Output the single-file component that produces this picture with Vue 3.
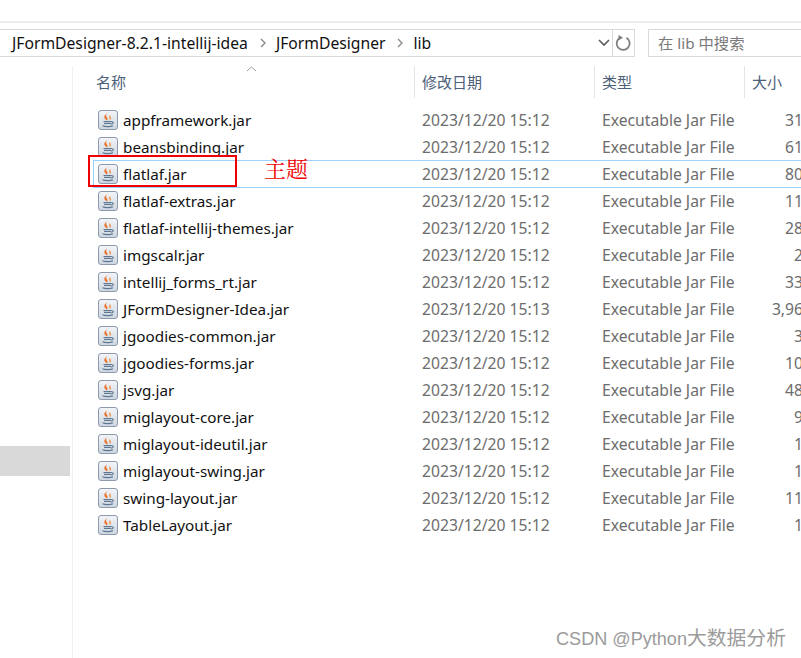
<script setup>
const rows = [
  ['appframework.jar', '2023/12/20 15:12', '31'],
  ['beansbinding.jar', '2023/12/20 15:12', '61'],
  ['flatlaf.jar', '2023/12/20 15:12', '80'],
  ['flatlaf-extras.jar', '2023/12/20 15:12', '11'],
  ['flatlaf-intellij-themes.jar', '2023/12/20 15:12', '28'],
  ['imgscalr.jar', '2023/12/20 15:12', '2'],
  ['intellij_forms_rt.jar', '2023/12/20 15:12', '33'],
  ['JFormDesigner-Idea.jar', '2023/12/20 15:13', '3,96'],
  ['jgoodies-common.jar', '2023/12/20 15:12', '3'],
  ['jgoodies-forms.jar', '2023/12/20 15:12', '10'],
  ['jsvg.jar', '2023/12/20 15:12', '48'],
  ['miglayout-core.jar', '2023/12/20 15:12', '9'],
  ['miglayout-ideutil.jar', '2023/12/20 15:12', '1'],
  ['miglayout-swing.jar', '2023/12/20 15:12', '1'],
  ['swing-layout.jar', '2023/12/20 15:12', '11'],
  ['TableLayout.jar', '2023/12/20 15:12', '1'],
]
</script>

<template>
  <div class="window">
    <div class="topbar">
      <div class="address">
        <span class="crumb">JFormDesigner-8.2.1-intellij-idea</span>
        <svg class="chev" width="8" height="12" viewBox="0 0 8 12"><path d="M2 2l4 4-4 4" fill="none" stroke="#8a8a8a" stroke-width="1.4"/></svg>
        <span class="crumb">JFormDesigner</span>
        <svg class="chev" width="8" height="12" viewBox="0 0 8 12"><path d="M2 2l4 4-4 4" fill="none" stroke="#8a8a8a" stroke-width="1.4"/></svg>
        <span class="crumb">lib</span>
        <svg class="drop" width="14" height="10" viewBox="0 0 14 10"><path d="M2 2l5 5 5-5" fill="none" stroke="#5c5c5c" stroke-width="1.6"/></svg>
        <div class="refresh">
          <svg width="17" height="18" viewBox="0 0 17 18"><path d="M11.500 3.800A6.500 6.500 0 1 1 5 3.700" fill="none" stroke="#7d7d7d" stroke-width="1.800"/><path d="M3.500 1v5.500l4.500-2.700z" fill="#7d7d7d"/></svg>
        </div>
      </div>
      <div class="search">在 lib 中搜索</div>
    </div>
    <div class="main">
      <aside class="side"><div class="side-sel"></div></aside>
      <div class="list">
        <div class="head">
          <svg class="sort" width="11" height="6" viewBox="0 0 11 6"><path d="M1 5l4.500-4 4.500 4" fill="none" stroke="#9a9a9a"/></svg>
          <div class="hcol c-name">名称</div>
          <div class="hcol c-date">修改日期</div>
          <div class="hcol c-type">类型</div>
          <div class="hcol c-size">大小</div>
        </div>
        <div class="rows">
          <div v-for="r in rows" :key="r[0]" class="row" :class="{ hot: r[0] === 'flatlaf.jar' }">
            <div class="c-name cell">
              <svg class="jar" width="20" height="20" viewBox="0 0 20 20">
                <defs>
                  <linearGradient id="jarbg" x1="0" y1="0" x2="0" y2="1">
                    <stop offset="0" stop-color="#f3f5f8"/>
                    <stop offset="1" stop-color="#cdd6e1"/>
                  </linearGradient>
                </defs>
                <rect x="0.500" y="0.500" width="19" height="19" rx="2.500" fill="url(#jarbg)" stroke="#8c9aab"/>
                <path d="M10.800 2c-3 2.300-3.300 3.800-1.700 5.700.8 1 .6 1.900-.1 2.700-2.300-1.400-3.500-3-2.200-4.900.8-1.100 2.500-2.300 4-3.500z" fill="#e8742a"/>
                <path d="M12.500 5c-1.800 1.100-1.900 2.200-1 3.300.5.700.3 1.300-.3 1.900 2-.7 2.400-2.200 1.500-3.300-.4-.6-.5-1.200-.2-1.900z" fill="#ee9a58"/>
                <path d="M5.500 11.500h8M6 13.400h7M4.500 15.800c2.500 1.100 8 1.100 10.500 0M13.500 11.800c2.400-.4 2.400 2.200-.4 2.300" fill="none" stroke="#5f7891" stroke-width="1.100"/>
              </svg>
              <span class="fname">{{ r[0] }}</span>
            </div>
            <div class="c-date cell muted">{{ r[1] }}</div>
            <div class="c-type cell muted">Executable Jar File</div>
            <div class="c-size cell muted"><span class="size-val">{{ r[2] }}</span></div>
          </div>
        </div>
      </div>
    </div>
    <div class="redbox"></div>
    <div class="note">主题</div>
    <div class="mark">CSDN @Python<span class="mark-cjk">大数据分析</span></div>
  </div>
</template>

<style scoped>
.window { position: relative; width: 801px; height: 658px; overflow: hidden; background: #fff; font-family: "Noto Sans", "Noto Sans CJK SC", sans-serif; font-size: 15px; padding-top: 21px; box-sizing: border-box; }
.topbar { height: 45px; border-top: 2px solid #ededed; display: flex; gap: 13px; box-sizing: border-box; padding-top: 6px; }
.address { width: 636px; height: 28px; flex: none; box-sizing: border-box; margin-left: -1px; border: 1px solid #d9d9d9; border-left: 0; display: flex; align-items: center; padding-left: 13px; color: #111; font-size: 15.700px; }
.crumb { white-space: nowrap; line-height: 26px; }
.chev { margin: 0 9px 0 11px; flex: none; }
.drop { margin-left: auto; margin-right: 1px; flex: none; }
.refresh { width: 21px; height: 26px; border-left: 1px solid #d9d9d9; display: flex; align-items: center; justify-content: center; flex: none; }
.search { flex: 1; height: 28px; box-sizing: border-box; border: 1px solid #d9d9d9; border-right: 0; padding-left: 9px; line-height: 26px; color: #7a7a7a; white-space: nowrap; font-size: 15.300px; }
.main { display: flex; height: 592px; }
.side { width: 72px; flex: none; border-right: 1px solid #f0f0f0; padding-top: 380px; }
.side-sel { width: 70px; height: 30px; background: #d9d9d9; }
.list { flex: 1; position: relative; min-width: 0; }
.head { display: flex; height: 32px; position: relative; }
.sort { position: absolute; left: 173px; top: 0; }
.hcol { color: #4c607a; line-height: 32px; white-space: nowrap; border-right: 1px solid #e5e5e5; height: 32px; }
.c-name { width: 342px; padding-left: 23px; box-sizing: border-box; flex: none; }
.c-date { width: 180px; padding-left: 7px; box-sizing: border-box; flex: none; }
.c-type { width: 150px; padding-left: 7px; box-sizing: border-box; flex: none; }
.c-size { width: 56px; padding-left: 7px; box-sizing: border-box; flex: none; }
.hcol.c-size { border-right: 0; }
.rows { padding-top: 8px; }
.row { height: 27px; display: flex; align-items: center; white-space: nowrap; position: relative; }
.row.hot::before { content: ""; position: absolute; left: 20px; right: 0; top: 0; height: 28px; box-sizing: border-box; border: 1px solid #99d1ff; border-right: 0; pointer-events: none; }
.cell { display: flex; align-items: center; height: 100%; padding-top: 1px; }
.jar { flex: none; margin-left: 2px; margin-right: 5px; }
.fname { color: #111; font-size: 15.250px; }
.muted { color: #6d6d6d; font-size: 15.700px; }
.c-size.cell { justify-content: flex-end; padding-left: 0; }
.size-val { margin-right: -2px; }
.redbox { position: absolute; left: 88px; top: 155px; width: 149px; height: 32px; box-sizing: border-box; border: 2px solid #f00000; }
.note { position: absolute; left: 264px; top: 153px; font-size: 22px; line-height: 30px; color: #f00000; font-family: "Noto Serif CJK SC", "Noto Sans CJK SC", sans-serif; }
.mark { position: absolute; left: 556px; top: 626px; font-size: 18.100px; line-height: 24px; color: #9b9b9b; font-family: "Liberation Sans", "Noto Sans CJK SC", sans-serif; white-space: nowrap; }
.mark-cjk { font-size: 19.800px; }
</style>
